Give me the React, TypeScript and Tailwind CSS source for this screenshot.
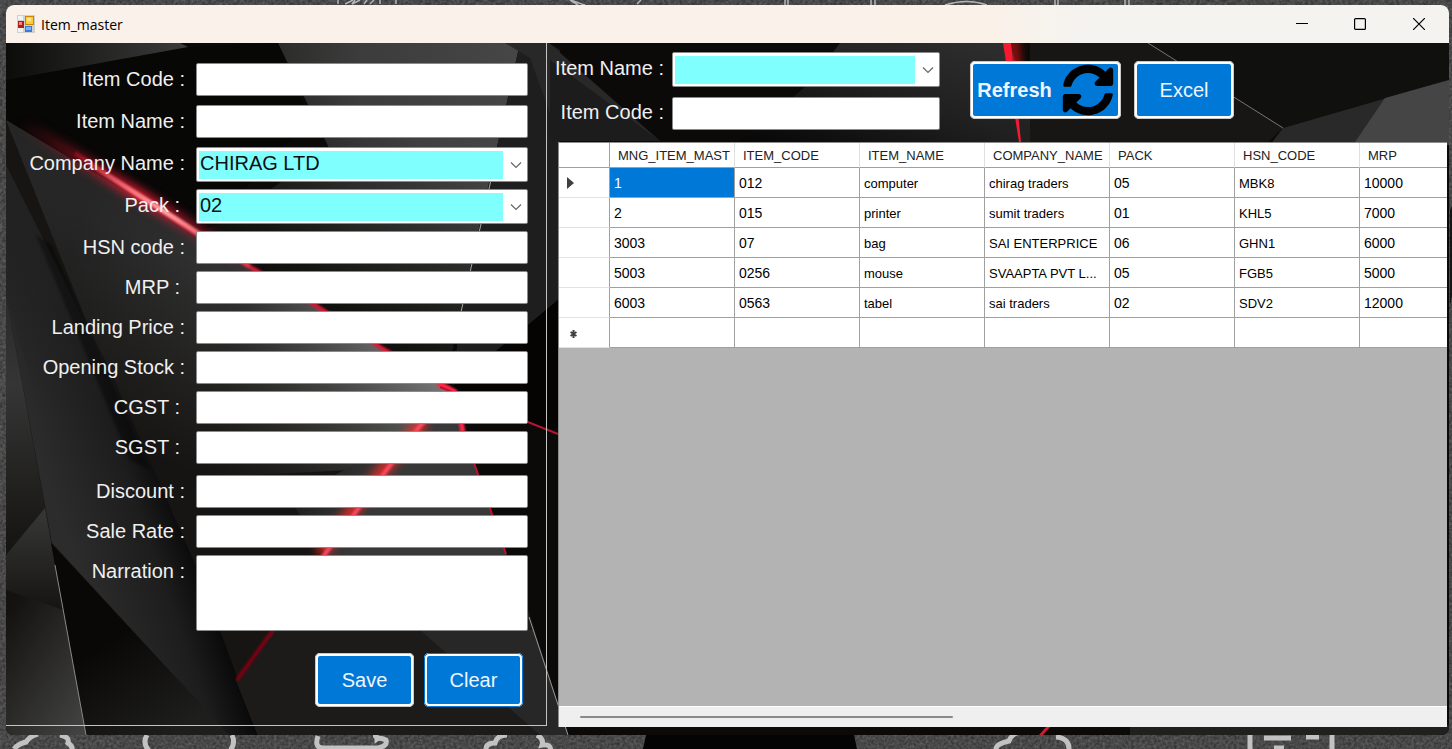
import React from "react";
import { FaSyncAlt } from "react-icons/fa";

type Field = {
  id: string;
  label: string;
  kind?: "text" | "select" | "area";
  value?: string;
  inset?: boolean;
};

const identityFields: Field[] = [
  { id: "code", label: "Item Code :" },
  { id: "name", label: "Item Name :" },
  { id: "company", label: "Company Name :", kind: "select", value: "CHIRAG LTD" },
  { id: "pack", label: "Pack :", kind: "select", value: "02", inset: true },
];

const priceFields: Field[] = [
  { id: "hsn", label: "HSN code :" },
  { id: "mrp", label: "MRP :", inset: true },
  { id: "landing", label: "Landing Price :" },
  { id: "opening", label: "Opening Stock :" },
  { id: "cgst", label: "CGST :", inset: true },
  { id: "sgst", label: "SGST :", inset: true },
];

const saleFields: Field[] = [
  { id: "discount", label: "Discount :" },
  { id: "rate", label: "Sale Rate :" },
  { id: "narration", label: "Narration :", kind: "area" },
];

const columns = ["MNG_ITEM_MAST", "ITEM_CODE", "ITEM_NAME", "COMPANY_NAME", "PACK", "HSN_CODE", "MRP"];

const rows = [
  ["1", "012", "computer", "chirag traders", "05", "MBK8", "10000"],
  ["2", "015", "printer", "sumit traders", "01", "KHL5", "7000"],
  ["3003", "07", "bag", "SAI ENTERPRICE", "06", "GHN1", "6000"],
  ["5003", "0256", "mouse", "SVAAPTA PVT L...", "05", "FGB5", "5000"],
  ["6003", "0563", "tabel", "sai traders", "02", "SDV2", "12000"],
];

const boxClass =
  "block w-full rounded-[2px] border border-[#8a8a8a] bg-white px-1 text-[20px] text-black outline-none";

function Combo({ id, value }: { id: string; value: string }) {
  return (
    <div className="flex h-[35px] w-full items-center rounded-[2px] border border-[#8a8a8a] bg-white p-[2px]">
      <select
        id={id}
        defaultValue={value}
        className="h-[28px] min-w-0 flex-1 appearance-none bg-[#80ffff] pb-1 pl-[1px] text-[20px] leading-[24px] text-[#111] outline-none"
      >
        <option value={value}>{value}</option>
      </select>
      <svg className="mr-[3px] ml-[7px] h-[10px] w-[12px] shrink-0" viewBox="0 0 12 10" fill="none" stroke="#666" strokeWidth="1.2" aria-hidden="true">
        <path d="M1 2.5 6 7.5 11 2.5" />
      </svg>
    </div>
  );
}

function FieldRow({ field }: { field: Field }) {
  return (
    <div className="grid grid-cols-[179px_1fr] items-start gap-[11px]">
      <label
        htmlFor={field.id}
        className={
          field.inset
            ? "pr-[5px] text-right text-[20px] leading-[32px] whitespace-nowrap text-[#f0f0f0]"
            : "text-right text-[20px] leading-[32px] whitespace-nowrap text-[#f0f0f0]"
        }
      >
        {field.label}
      </label>
      {field.kind === "select" ? (
        <Combo id={field.id} value={field.value ?? ""} />
      ) : field.kind === "area" ? (
        <textarea id={field.id} className={`${boxClass} h-[76px] resize-none`} />
      ) : (
        <input id={field.id} type="text" className={`${boxClass} h-[33px]`} />
      )}
    </div>
  );
}

function ActionButton({ children, focused, className = "" }: { children: React.ReactNode; focused?: boolean; className?: string }) {
  return (
    <button
      type="button"
      className={`flex items-center justify-center rounded-[5px] border-[3px] border-white bg-[#0078d7] text-[20px] text-[#eef5ff] ${
        focused ? "outline-1 -outline-offset-1 outline-[#0078d7]" : "outline-1 -outline-offset-1 outline-[#c8c8c8]"
      } ${className}`}
    >
      {children}
    </button>
  );
}

function DesktopWallpaper() {
  return (
    <svg className="absolute inset-0 h-full w-full" viewBox="0 0 1452 749" preserveAspectRatio="xMidYMid slice" aria-hidden="true">
      <filter id="grain" x="0" y="0" width="100%" height="100%" colorInterpolationFilters="sRGB">
        <feTurbulence type="fractalNoise" baseFrequency="0.35" numOctaves="3" />
        <feColorMatrix values="0.25 0 0 0 0.16  0.25 0 0 0 0.16  0.25 0 0 0 0.16  0 0 0 0 1" />
      </filter>
      <rect width="1452" height="749" fill="#484848" />
      <rect width="1452" height="749" filter="url(#grain)" />
      <g fill="none" stroke="#b5b5b5" strokeWidth="1.5">
        <path d="M338 0v4M396 0v4M345 4l8-4M355 0l-3 4 8-4M364 4l3-4M370 4l4-4M380 0v4M570 0l8 5M641 0l-4 4M571 0q10 4 14 5M785 0v5M788 0v5M871 0v5M875 0v5M945 5q22-7 42 0M1055 0v5M1058 0v5M1125 0v5M1129 0v5" />
      </g>
      <g fill="none" stroke="#c2c2c2" strokeWidth="5">
        <path d="M14 749q4-5 12-7 4-6 12-8M60 735q10 2 8 8 5 3 4 8" />
        <path d="M147 735q-5 8 2 16M232 735q4 8-2 16M318 736q-4 12 5 12h55q10-2 8-8-6-3-9-1 0-4-4-4" />
        <path d="M486 749q0-6 9-6 2-8 12-8M537 735q7 4 5 10 9-2 9 7" />
        <path d="M996 749q0-5 13-8 2-6 8-8M1056 737q14 1 13 14M1250 735v14M1264 738h27M1306 737h13M1332 735v14M1274 748h10" />
      </g>
      <path d="M646 735h208l3 14H643z" fill="#040404" />
      <path d="M1450 210l2-4v90l-2 10z" fill="#151515" />
    </svg>
  );
}

function FacetBackdrop() {
  return (
    <svg className="absolute inset-0 h-full w-full" viewBox="6 43 1443 692" preserveAspectRatio="xMinYMin slice" aria-hidden="true">
      <defs>
        <linearGradient id="topLeft" x1="0" x2="1"><stop offset="0" stopColor="#0c0c0b" /><stop offset="1" stopColor="#3b3b3b" /></linearGradient>
        <linearGradient id="upper" x1="0" x2="1"><stop offset="0" stopColor="#1c1c1a" /><stop offset="0.5" stopColor="#3c3c3c" /><stop offset="1" stopColor="#464646" /></linearGradient>
        <linearGradient id="fade" x1="0.7" x2="0.2" y1="0" y2="1"><stop offset="0.25" stopColor="#080806" stopOpacity="0" /><stop offset="0.85" stopColor="#080806" stopOpacity="0.95" /></linearGradient>
        <linearGradient id="slab" gradientUnits="userSpaceOnUse" x1="60" y1="300" x2="450" y2="400"><stop offset="0" stopColor="#262626" /><stop offset="0.45" stopColor="#343434" /><stop offset="1" stopColor="#8e8e8e" /></linearGradient>
        <linearGradient id="slabDown" gradientUnits="userSpaceOnUse" x1="280" y1="290" x2="210" y2="480"><stop offset="0" stopColor="#151412" stopOpacity="0" /><stop offset="1" stopColor="#151412" /></linearGradient>
        <linearGradient id="blade" gradientUnits="userSpaceOnUse" x1="40" y1="460" x2="185" y2="410"><stop offset="0" stopColor="#2c2c2c" /><stop offset="0.5" stopColor="#1d1d1d" /><stop offset="0.85" stopColor="#020202" /></linearGradient>
        <linearGradient id="bladeTop" gradientUnits="userSpaceOnUse" x1="0" y1="180" x2="0" y2="420"><stop offset="0" stopColor="#222" /><stop offset="1" stopColor="#222" stopOpacity="0" /></linearGradient>
        <linearGradient id="corner" x1="0.2" x2="1" y1="0" y2="1"><stop offset="0" stopColor="#131210" /><stop offset="1" stopColor="#454545" /></linearGradient>
        <linearGradient id="leftShard" x1="0" x2="0" y1="0" y2="1"><stop offset="0" stopColor="#383838" /><stop offset="1" stopColor="#151412" /></linearGradient>
        <linearGradient id="leftGlow" x1="0" x2="0" y1="0" y2="1"><stop offset="0" stopColor="#2a2a2a" /><stop offset="0.35" stopColor="#353535" /><stop offset="1" stopColor="#141311" /></linearGradient>
        <linearGradient id="wedge" gradientUnits="userSpaceOnUse" x1="110" y1="640" x2="170" y2="735"><stop offset="0" stopColor="#090806" /><stop offset="1" stopColor="#1e1e1d" /></linearGradient>
        <linearGradient id="middle" gradientUnits="userSpaceOnUse" x1="310" y1="440" x2="390" y2="480"><stop offset="0" stopColor="#1a1918" /><stop offset="1" stopColor="#3c3c3c" /></linearGradient>
        <linearGradient id="right" x1="0" x2="1" y1="1" y2="0"><stop offset="0" stopColor="#050505" /><stop offset="0.5" stopColor="#202020" /><stop offset="1" stopColor="#303030" /></linearGradient>
        <linearGradient id="streak" gradientUnits="userSpaceOnUse" x1="30" y1="130" x2="450" y2="390"><stop offset="0" stopColor="#c01020" stopOpacity="0" /><stop offset="0.25" stopColor="#ef2038" /><stop offset="0.5" stopColor="#d81c36" /><stop offset="1" stopColor="#e01434" /></linearGradient>
        <linearGradient id="glow" gradientUnits="userSpaceOnUse" x1="20" y1="122" x2="260" y2="272"><stop offset="0" stopColor="#b01020" stopOpacity="0" /><stop offset="0.5" stopColor="#dc1c34" /><stop offset="1" stopColor="#c81430" stopOpacity="0" /></linearGradient>
        <linearGradient id="core" gradientUnits="userSpaceOnUse" x1="80" y1="155" x2="250" y2="266"><stop offset="0" stopColor="#ffb0b0" stopOpacity="0" /><stop offset="0.5" stopColor="#ffa4a4" /><stop offset="1" stopColor="#ff7070" stopOpacity="0.3" /></linearGradient>
        <filter id="soft" x="-50%" y="-50%" width="200%" height="200%" colorInterpolationFilters="sRGB"><feGaussianBlur stdDeviation="5" /></filter>
        <filter id="soft2" x="-50%" y="-50%" width="200%" height="200%" colorInterpolationFilters="sRGB"><feGaussianBlur stdDeviation="1.2" /></filter>
      </defs>
      <rect x="6" y="43" width="1443" height="692" fill="#0b0a09" />
      <path d="M6 80L188 47 278 43 310 120 200 236 6 120z" fill="#070706" />
      <path d="M6 43H180L188 47 6 80z" fill="url(#topLeft)" />
      <path d="M278 43H520L452 350 420 372 200 236 330 150z" fill="url(#upper)" />
      <path d="M278 43H520L452 350 420 372 200 236 330 150z" fill="url(#fade)" />
      <path d="M520 43H549L560 50V300L528 325 452 392 461 310z" fill="#1e1e1e" />
      <path d="M505 43H549L660 141H560L530 58z" fill="#282828" />
      <path d="M491 180L461 312" stroke="#a8a8a8" strokeWidth="1" />
      <path d="M528 325L560 298V430L528 424 450 388z" fill="#050403" />

      <path d="M6 120L200 236 452 390 500 540 440 640 258 735H6z" fill="#161513" />
      <path d="M6 120L200 236 455 392 427 424 350 470 150 480z" fill="url(#slab)" />
      <path d="M6 120L200 236 455 392 427 424 350 470 280 500 100 480z" fill="url(#slabDown)" />
      <path d="M6 165L110 370 200 575 258 735H229L52 543 6 295z" fill="url(#blade)" />
      <path d="M6 165L135 425 60 480 6 295z" fill="url(#bladeTop)" />
      <path d="M36 235L52 245 150 470 130 460z" fill="#000" opacity="0.35" filter="url(#soft2)" />
      <path d="M6 295L45 508 6 555z" fill="url(#leftGlow)" />
      <path d="M45 508L63 610 6 590V555z" fill="url(#leftShard)" />
      <path d="M6 590L63 610 86 735H6z" fill="url(#corner)" />
      <path d="M51 543L229 735H86z" fill="url(#wedge)" />
      <path d="M55 565L86 735" stroke="#8a8a8a" strokeWidth="1" />

      <path d="M427 424H459L506 553 530 618 568 735H258L236 680 326 554 290 500z" fill="url(#middle)" />
      <path d="M427 424H459L506 553V600H310L326 554z" fill="#363636" opacity="0.7" />
      <path d="M236 680L300 600H525L568 735H258z" fill="#1c1b1a" />
      <path d="M420 630H533L568 735H540z" fill="#303030" opacity="0.6" />
      <path d="M529 617L568 735" stroke="#999" strokeWidth="1" />

      <path d="M20 122L205 236 270 276" stroke="url(#glow)" strokeWidth="13" filter="url(#soft)" fill="none" />
      <path d="M75 153L200 236 245 264 315 305 380 347 455 392" stroke="url(#streak)" strokeWidth="4" filter="url(#soft2)" fill="none" />
      <path d="M80 158L140 196 250 266" stroke="url(#core)" strokeWidth="5" filter="url(#soft2)" fill="none" />
      <path d="M424 420L383 470 320 554" stroke="#ff2a24" strokeWidth="13" opacity="0.75" filter="url(#soft)" fill="none" />
      <path d="M426 418L385 472 322 558" stroke="#ff4860" strokeWidth="4" filter="url(#soft2)" fill="none" />
      <path d="M461 412V436" stroke="#ff2230" strokeWidth="12" filter="url(#soft2)" opacity="0.6" fill="none" />
      <path d="M438 384L455 392 463 432" stroke="#ff2848" strokeWidth="5" filter="url(#soft2)" fill="none" />
      <path d="M463 432L506 554" stroke="#bc1230" strokeWidth="2" />
      <path d="M440 387L558 434" stroke="#b31632" strokeWidth="2" />
      <path d="M273 630L237 680" stroke="#780010" strokeWidth="4" filter="url(#soft2)" />

      <path d="M550 60L660 141H550z" fill="#1c1c1c" />
      <path d="M810 83L840 43H1010L1040 145H735z" fill="url(#right)" />
      <path d="M1030 43H1148L1283 128 1265 145H1030z" fill="#171614" />
      <path d="M1148 43H1449V80L1283 128z" fill="#10100e" />
      <path d="M1283 128L1449 80V145H1270z" fill="#292929" />
      <path d="M1353 145L1385 98 1449 80V145z" fill="#454545" />
      <path d="M1148 43L1283 128" stroke="#777" strokeWidth="1" />
      <path d="M1009 35L1017 35 1021 72 1012 72z" fill="#ff1515" opacity="0.7" filter="url(#soft)" />
      <path d="M1003 43H1011L1021 142H1019z" fill="#f51932" />
      <path d="M1130 725H1449V735H1130z" fill="#20201f" />
      <path d="M1040 736L1050 725" stroke="#c81e30" strokeWidth="3" />
    </svg>
  );
}

function AppIcon() {
  return (
    <svg className="h-[18px] w-[18px]" viewBox="0 0 18 18" aria-hidden="true">
      <rect width="18" height="18" fill="#d0d0d0" />
      <rect x="1" y="1" width="5" height="4" fill="#f2f2f2" />
      <rect x="1" y="13" width="5" height="4" fill="#f2f2f2" />
      <rect x="1" y="6" width="6" height="7" fill="#b51c1c" />
      <rect x="2" y="7" width="3" height="3" fill="#ed8b80" />
      <rect x="8" y="1" width="9" height="9" fill="#c88900" />
      <rect x="9" y="2" width="7" height="7" fill="#ffcc35" />
      <rect x="10" y="3" width="4" height="3" fill="#ffe48a" />
      <rect x="8" y="11" width="7" height="6" fill="#3b78d8" />
      <rect x="9" y="12" width="5" height="3" fill="#82b2fa" />
    </svg>
  );
}

export default function App() {
  return (
    <div className="relative flex min-h-screen flex-col overflow-hidden bg-[#484848] pt-[5px] pr-[3px] pb-[14px] pl-[6px] font-['Liberation_Sans',Arial,sans-serif]">
      <DesktopWallpaper />
      <div className="relative flex flex-1 flex-col overflow-hidden rounded-lg bg-black">
        <header className="flex h-[38px] shrink-0 items-center bg-gradient-to-r from-[#faf1ea] from-60% via-[#faf1e8] via-68% to-[#f4f3f0] to-75% pl-[11px]">
          <AppIcon />
          <h1 className="ml-[6px] flex-1 font-['Open_Sans','Noto_Sans',sans-serif] text-[14px] text-black">Item_master</h1>
          <button type="button" aria-label="Minimize" className="flex h-full w-[58px] items-center justify-center">
            <svg width="12" height="12" viewBox="0 0 12 12" stroke="#000" aria-hidden="true"><path d="M0 5.5H12" /></svg>
          </button>
          <button type="button" aria-label="Maximize" className="flex h-full w-[58px] items-center justify-center">
            <svg width="12" height="12" viewBox="0 0 12 12" fill="none" stroke="#000" strokeWidth="1.2" aria-hidden="true"><rect x="0.6" y="0.6" width="10.8" height="10.8" rx="1" /></svg>
          </button>
          <button type="button" aria-label="Close" className="flex h-full w-[60px] items-center justify-center">
            <svg width="12" height="12" viewBox="0 0 12 12" stroke="#000" strokeWidth="1.2" aria-hidden="true"><path d="M0 0 12 12M12 0 0 12" /></svg>
          </button>
        </header>

        <main className="relative flex flex-1">
          <FacetBackdrop />
          <form className="relative mb-[9px] w-[541px] shrink-0 border-r border-b border-[#c4c4c4] pt-5 pr-[18px]">
            <div className="grid auto-rows-[42px]">
              {identityFields.map((f) => <FieldRow key={f.id} field={f} />)}
            </div>
            <div className="grid auto-rows-[40px]">
              {priceFields.map((f) => <FieldRow key={f.id} field={f} />)}
            </div>
            <div className="mt-1 grid auto-rows-[40px]">
              {saleFields.map((f) => <FieldRow key={f.id} field={f} />)}
            </div>
            <div className="mt-[58px] flex justify-end gap-[10px] pr-[5px]">
              <ActionButton className="h-[54px] w-[99px]">Save</ActionButton>
              <ActionButton focused className="h-[54px] w-[99px]">Clear</ActionButton>
            </div>
          </form>

          <section className="relative flex min-w-0 flex-1 flex-col pr-[2px] pb-2 pl-[8px]">
            <div className="flex pt-[9px] pb-[12px]">
              <div className="grid grid-cols-[109px_268px] items-start gap-x-[8px] gap-y-[10px]">
                <label htmlFor="filter-name" className="text-right text-[20px] leading-[32px] whitespace-nowrap text-[#f0f0f0]">Item Name :</label>
                <Combo id="filter-name" value="" />
                <label htmlFor="filter-code" className="text-right text-[20px] leading-[30px] whitespace-nowrap text-[#f0f0f0]">Item Code :</label>
                <input id="filter-code" type="text" className={`${boxClass} h-[33px]`} />
              </div>
              <div className="ml-[30px] flex gap-[13px] pt-[9px]">
                <ActionButton className="h-[58px] w-[151px] gap-[10px] font-bold">
                  Refresh
                  <FaSyncAlt className="h-[52px] w-[52px] text-black" aria-hidden="true" />
                </ActionButton>
                <ActionButton className="h-[58px] w-[100px]">Excel</ActionButton>
              </div>
            </div>

            <div className="ml-[3px] flex min-h-0 flex-1 flex-col overflow-hidden border-t border-l border-[#8c8c8c] bg-[#b3b3b3]">
              <div className="flex-1 overflow-hidden">
                <table className="w-[926px] table-fixed border-separate border-spacing-0 bg-white text-left">
                  <colgroup>
                    <col className="w-[51px]" />
                    {columns.map((c) => <col key={c} className="w-[125px]" />)}
                  </colgroup>
                  <thead>
                    <tr className="h-[25px] text-[13px]">
                      <th className="border-r border-b border-[#a0a0a0]" aria-label="Row state" />
                      {columns.map((c) => (
                        <th key={c} className="overflow-hidden border-r border-b border-r-[#e0e0e0] border-b-[#a0a0a0] pt-[2px] pl-2 font-normal whitespace-nowrap text-[#222]">{c}</th>
                      ))}
                    </tr>
                  </thead>
                  <tbody>
                    {rows.map((row, r) => (
                      <tr key={row[0]} className="h-[30px] text-[13px] text-black">
                        <th className="border-r border-b border-r-[#a0a0a0] border-b-[#e2e2e2] pl-[8px]">
                          {r === 0 && (
                            <svg width="7" height="12" viewBox="0 0 7 12" aria-label="Current row"><path d="M0 0 7 6 0 12z" fill="#404040" /></svg>
                          )}
                        </th>
                        {row.map((cell, c) => (
                          <td
                            key={c}
                            className={`overflow-hidden border-r border-b border-[#a0a0a0] pt-[2px] pl-1 whitespace-nowrap ${
                              /^\d+$/.test(cell) ? "text-[14px]" : ""
                            } ${r === 0 && c === 0 ? "bg-[#0078d7] text-white" : ""}`}
                          >
                            {cell}
                          </td>
                        ))}
                      </tr>
                    ))}
                    <tr className="h-[30px]">
                      <th className="border-r border-b border-r-[#a0a0a0] border-b-[#e2e2e2] pt-[2px] pl-[11px]">
                        <svg width="7" height="8" viewBox="0 0 7 8" stroke="#404040" strokeWidth="2" aria-label="New row"><path d="M3.5 0V8M0.5 2 6.5 6M6.5 2 0.5 6" /></svg>
                      </th>
                      {columns.map((c) => <td key={c} className="border-r border-b border-[#a0a0a0]" />)}
                    </tr>
                  </tbody>
                </table>
              </div>
              <div className="flex h-[21px] shrink-0 items-center border-t border-white bg-[#efefef] pl-[21px]">
                <div className="h-[2px] w-[43%] rounded-full bg-[#8a8a8a]" />
              </div>
            </div>
          </section>
        </main>
      </div>
    </div>
  );
}
